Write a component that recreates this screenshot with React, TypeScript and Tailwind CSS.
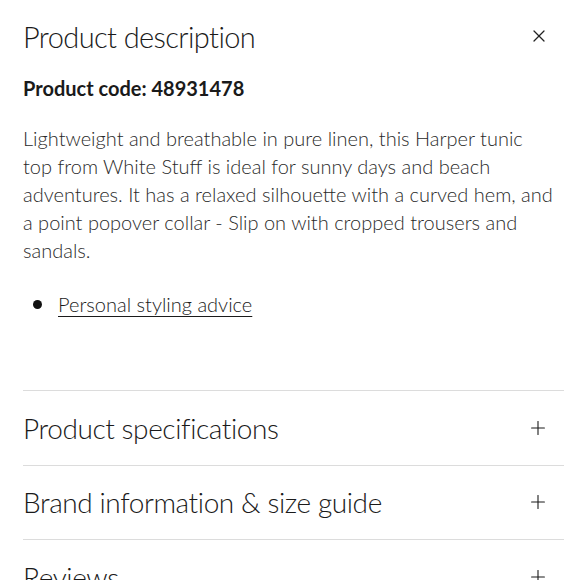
import { X, Plus } from 'lucide-react'

const sections = ['Product specifications', 'Brand information & size guide', 'Reviews']

export default function App() {
  return (
    <div className="w-[580px] h-[580px] overflow-hidden bg-white text-[#1a1a1a] font-['Lato',sans-serif] pl-[23px] pr-[16px] pt-[16px]">
      {/* Header */}
      <div className="flex items-center justify-between h-[40px]">
        <h2 className="text-[29px] font-light tracking-[-0.6px] leading-none">Product description</h2>
        <button className="mr-[15px] text-[#222]">
          <X size={20} strokeWidth={1.5} />
        </button>
      </div>

      <p className="mt-[18px] text-[20px] font-bold leading-[28px]">Product code: 48931478</p>

      <p className="mt-[22px] pr-[7px] text-[20px] font-light leading-[28px] text-[#2a2a2a]">
        Lightweight and breathable in pure linen, this Harper tunic top from White Stuff is ideal for sunny days and beach
        adventures. It has a relaxed silhouette with a curved hem, and a point popover collar - Slip on with cropped trousers and
        sandals.
      </p>

      <ul className="mt-[26px] pl-[10px]">
        <li className="flex items-center gap-[16px] text-[20px] font-light leading-[28px]">
          <span className="w-[9px] h-[9px] rounded-full bg-[#111]" />
          <a className="underline underline-offset-[4px] decoration-1">Personal styling advice</a>
        </li>
      </ul>

      <div className="mt-[72px]">
        {sections.map(s => (
          <div key={s} className="border-t border-[#dcdcdc] h-[74.5px] flex items-center justify-between">
            <span className="text-[28px] font-light tracking-[-0.4px] leading-none">{s}</span>
            <Plus size={22} strokeWidth={1.2} className="mr-[15px]" />
          </div>
        ))}
      </div>
    </div>
  )
}
